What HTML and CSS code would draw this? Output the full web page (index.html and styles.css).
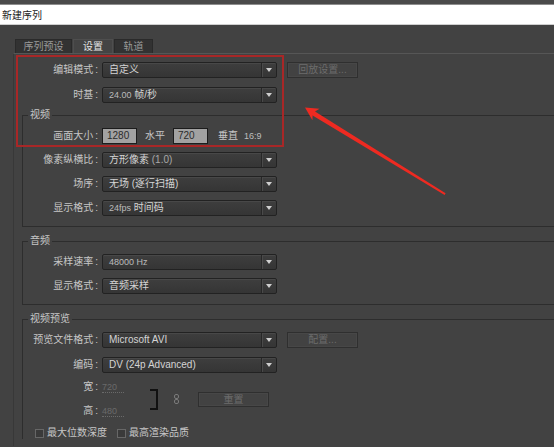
FILE: index.html
```html
<!DOCTYPE html>
<html lang="zh-CN">
<head>
<meta charset="utf-8">
<title>新建序列</title>
<link rel="stylesheet" href="styles.css">
</head>
<body>
<div class="topstrip"></div>
<div class="titlebar">新建序列</div>
<div class="main">
  <div class="tabs">
    <div class="tab t1">序列预设</div>
    <div class="tab t2 active">设置</div>
    <div class="tab t3">轨道</div>
  </div>
  <div class="panel">
    <div class="row">
      <span class="lbl">编辑模式</span>
      <div class="select"><span class="val">自定义</span><span class="drop"></span></div>
      <div class="btn">回放设置...</div>
    </div>
    <div class="row gap9">
      <span class="lbl">时基</span>
      <div class="select"><span class="val"><span class="sm">24.00</span> 帧/秒</span><span class="drop"></span></div>
    </div>

    <fieldset class="group">
      <legend>视频</legend>
      <div class="row">
        <span class="lbl">画面大小</span>
        <span class="num">1280</span>
        <span class="unit u1">水平</span>
        <span class="num">720</span>
        <span class="unit u2">垂直</span>
        <span class="ratio">16:9</span>
      </div>
      <div class="row">
        <span class="lbl">像素纵横比</span>
        <div class="select"><span class="val">方形像素 <span class="dimtxt">(1.0)</span></span><span class="drop"></span></div>
      </div>
      <div class="row">
        <span class="lbl">场序</span>
        <div class="select"><span class="val">无场 (逐行扫描)</span><span class="drop"></span></div>
      </div>
      <div class="row">
        <span class="lbl">显示格式</span>
        <div class="select"><span class="val"><span class="sm">24fps</span> 时间码</span><span class="drop"></span></div>
      </div>
    </fieldset>

    <fieldset class="group">
      <legend>音频</legend>
      <div class="row">
        <span class="lbl">采样速率</span>
        <div class="select"><span class="val"><span class="sm">48000 Hz</span></span><span class="drop"></span></div>
      </div>
      <div class="row">
        <span class="lbl">显示格式</span>
        <div class="select"><span class="val">音频采样</span><span class="drop"></span></div>
      </div>
    </fieldset>

    <fieldset class="group last">
      <legend>视频预览</legend>
      <div class="row">
        <span class="lbl">预览文件格式</span>
        <div class="select"><span class="val">Microsoft AVI</span><span class="drop"></span></div>
        <div class="btn">配置...</div>
      </div>
      <div class="row gap9">
        <span class="lbl">编码</span>
        <div class="select"><span class="val">DV (24p Advanced)</span><span class="drop"></span></div>
      </div>
      <div class="wh">
        <div class="whcol">
          <div class="whrow"><span class="lbl">宽</span><span class="dim">720</span></div>
          <div class="whrow"><span class="lbl">高</span><span class="dim">480</span></div>
        </div>
        <div class="bracket"></div>
        <svg class="link" width="5" height="10" viewBox="0 0 5 10"><rect x="0.5" y="0.5" width="4" height="4" rx="1.5" fill="none" stroke="#7a7a7a"/><rect x="0.5" y="5.5" width="4" height="4" rx="1.5" fill="none" stroke="#7a7a7a"/></svg>
        <div class="btn reset">重置</div>
      </div>
      <div class="checks">
        <span class="chk"><span class="box"></span>最大位数深度</span>
        <span class="chk c2"><span class="box"></span>最高渲染品质</span>
      </div>
    </fieldset>
  </div>
</div>

<div class="annot">
  <div class="redbox"></div>
  <svg class="arrow" width="554" height="447" viewBox="0 0 554 447">
    <polygon points="305,107.5 319.5,108.8 315,111.6 445.6,193.3 444.6,195 312.6,115.6 312.4,120.3" fill="#ee2a21"/>
  </svg>
</div>
</body>
</html>
```
FILE: styles.css
```css
* { box-sizing: border-box; }
html, body { margin: 0; padding: 0; }
body {
  width: 554px;
  height: 447px;
  overflow: hidden;
  position: relative;
  background: #424242;
  font-family: "Liberation Sans", "Noto Sans CJK SC", sans-serif;
  font-size: 10px;
  color: #c9c9c9;
}
.topstrip { height: 4px; background: #4b4b4b; }
.titlebar {
  height: 21px;
  background: #ffffff;
  border-top: 1px solid #8e8e8e;
  border-bottom: 1px solid #cfcfcf;
  padding-left: 2px;
  line-height: 19px;
  font-size: 10px;
  color: #1a1a1a;
  font-family: "Noto Sans CJK SC", sans-serif;
}
.main { padding-top: 14px; }
.tabs { display: flex; gap: 1px; padding-left: 15px; height: 14px; }
.tab {
  height: 14px;
  line-height: 13px;
  text-align: center;
  background: #323232;
  color: #9a9a9a;
  border: 1px solid #2a2a2a;
  border-bottom: none;
}
.t1 { width: 57px; }
.t2 { width: 40px; }
.t3 { width: 39px; }
.tab.active { background: #444444; color: #e2e2e2; border-color: #4e4e4e; }

.panel {
  margin-left: 13px;
  height: 393px;
  border-top: 1px solid #565656;
  border-left: 1px solid #383838;
  padding-top: 8px;
  --lw: 84px;
}
.row { display: flex; align-items: center; height: 16px; }
.row + .row { margin-top: 8px; }
.row.gap9 { margin-top: 9px; }
.lbl {
  flex: none;
  width: var(--lw);
  margin-right: 4px;
  text-align: right;
  line-height: 12px;
  color: #c6c6c6;
  white-space: nowrap;
}
.lbl::after { content: ":"; margin-left: 2px; }

.select {
  flex: none;
  width: 175px;
  height: 16px;
  display: flex;
  align-items: stretch;
  border: 1px solid #222222;
  border-radius: 2px;
  background: linear-gradient(#3e3e3e, #353535);
  box-shadow: inset 0 1px 0 #484848;
}
.val {
  flex: 1;
  padding-left: 6px;
  line-height: 14px;
  color: #d4d4d4;
  white-space: nowrap;
}
.sm { font-size: 9px; color: #bbbbbb; }
.dimtxt { color: #a8a8a8; }
.drop {
  flex: none;
  width: 15px;
  border-left: 1px solid #272727;
  box-shadow: inset 1px 0 0 #4a4a4a;
  display: flex;
  align-items: center;
  justify-content: center;
}
.drop::after {
  content: "";
  border-top: 4px solid #cfcfcf;
  border-left: 3px solid transparent;
  border-right: 3px solid transparent;
}
.btn {
  flex: none;
  width: 71px;
  height: 16px;
  margin-left: 10px;
  border: 1px solid #2f2f2f;
  box-shadow: inset 0 0 0 1px #474747;
  color: #6c6c6c;
  text-align: center;
  line-height: 14px;
  white-space: nowrap;
}

.num {
  flex: none;
  width: 35px;
  height: 16px;
  padding-left: 4px;
  background: #a2a2a2;
  border: 1px solid #1c1c1c;
  color: #2b2b2b;
  line-height: 14px;
}
.unit { flex: none; line-height: 12px; color: #c6c6c6; }
.u1 { margin: 0 8px 0 8px; }
.u2 { margin: 0 6px 0 10px; }
.ratio { font-size: 9px; color: #bdbdbd; }

.group {
  margin: 6px 0 0 8px;
  padding: 0 0 10px 0;
  border: 1px solid #2d2d2d;
  border-right: none;
  min-inline-size: 0;
  --lw: 75px;
}
.group + .group { margin-top: 8px; }
.group.last { padding-bottom: 0; border-bottom: none; }
.group legend {
  margin-left: 5px;
  padding: 0 2px;
  line-height: 12px;
  font-size: 10px;
  color: #c6c6c6;
}
.group .row:first-of-type { margin-top: 7px; }

.wh { display: flex; align-items: center; margin-top: 8px; height: 36px; }
.whcol { display: flex; flex-direction: column; gap: 12px; }
.whrow { display: flex; align-items: center; height: 12px; }
.dim {
  width: 22px;
  font-size: 9px;
  line-height: 10px;
  color: #6a6a6a;
  border-bottom: 1px dotted #6a6a6a;
}
.bracket {
  flex: none;
  width: 8px;
  height: 21px;
  margin-left: 26px;
  border: 2px solid #111111;
  border-left: none;
}
.link { flex: none; margin-left: 16px; }
.btn.reset { height: 15px; margin-left: 19px; line-height: 13px; }

.checks { display: flex; align-items: center; margin-top: 10px; padding-left: 12px; height: 12px; }
.chk { display: flex; align-items: center; line-height: 12px; color: #c6c6c6; }
.chk.c2 { margin-left: 10px; }
.box {
  width: 9px;
  height: 9px;
  margin-right: 3px;
  border: 1px solid #676767;
  background: #3a3a3a;
}

.annot { position: absolute; left: 0; top: 0; width: 554px; height: 447px; pointer-events: none; }
.redbox {
  position: absolute;
  left: 16px;
  top: 55px;
  width: 268px;
  height: 92px;
  border: 2px solid #a82727;
}
.arrow { position: absolute; left: 0; top: 0; }
```
